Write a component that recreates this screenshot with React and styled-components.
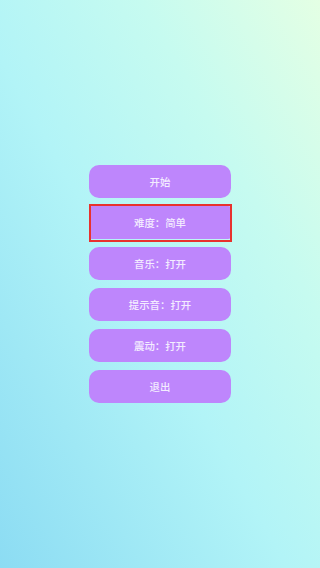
import * as React from 'react';
import styled, { createGlobalStyle } from 'styled-components';

const GlobalStyle = createGlobalStyle`
  html, body {
    margin: 0;
    padding: 0;
    height: 100%;
  }
  body {
    font-family: "Noto Sans CJK SC", "Noto Sans", sans-serif;
  }
`;

const Screen = styled.div`
  width: 100vw;
  height: 100vh;
  display: flex;
  flex-direction: column;
  align-items: center;
  justify-content: center;
  gap: 8.2px;
  background: linear-gradient(to top right, #8cdcf3 0%, #b2f4f7 45%, #c6fbf0 72%, #e4ffe4 100%);
  overflow: hidden;
`;

const MenuButton = styled.button`
  position: relative;
  width: 142px;
  height: 33px;
  border: none;
  border-radius: 10px;
  background: #be86fc;
  color: #f3ecff;
  font-family: "Noto Sans CJK SC", "Noto Sans", sans-serif;
  font-size: 10.4px;
  font-weight: 500;
  cursor: pointer;
  padding: 0;

  ${(p) =>
    p.$selected &&
    `
    border-radius: 3px;
    &::after {
      content: '';
      position: absolute;
      top: -2px;
      left: 0;
      right: -1px;
      bottom: -3px;
      border: 2px solid #e8322e;
      pointer-events: none;
    }
  `}
`;

const items = ['开始', '难度：简单', '音乐：打开', '提示音：打开', '震动：打开', '退出'];

export default function App() {
  return (
    <>
      <GlobalStyle />
      <Screen>
        {items.map((label, i) => (
          <MenuButton key={label} $selected={i === 1}>
            {label}
          </MenuButton>
        ))}
      </Screen>
    </>
  );
}
